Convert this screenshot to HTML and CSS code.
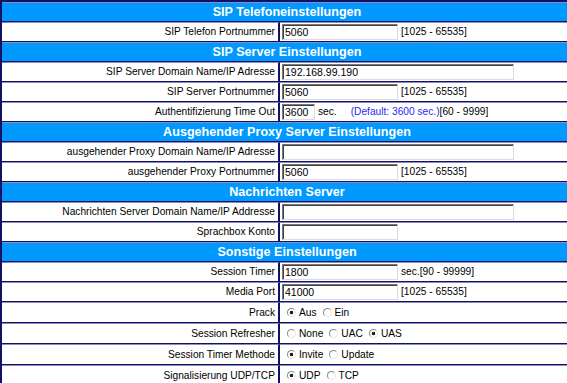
FILE: index.html
```html
<!doctype html>
<html lang="de">
<head>
	<meta charset="utf-8">
	<title>SIP Einstellungen</title>
	<link rel="stylesheet" href="styles.css">
</head>
<body>
	<form class="page">
		<table class="cfg">
			<tr class="head"><td colspan="2">SIP Telefoneinstellungen</td></tr>
			<tr>
				<td class="lbl">SIP Telefon Portnummer</td>
				<td class="val"><input class="field w-port" value="5060"><span class="hint">[1025 - 65535]</span></td>
			</tr>

			<tr class="head"><td colspan="2">SIP Server Einstellungen</td></tr>
			<tr>
				<td class="lbl">SIP Server Domain Name/IP Adresse</td>
				<td class="val"><input class="field w-host" value="192.168.99.190"></td>
			</tr>
			<tr>
				<td class="lbl">SIP Server Portnummer</td>
				<td class="val"><input class="field w-port" value="5060"><span class="hint">[1025 - 65535]</span></td>
			</tr>
			<tr>
				<td class="lbl">Authentifizierung Time Out</td>
				<td class="val"><input class="field w-short" value="3600"><span class="hint">sec.</span><span class="note">(Default: 3600 sec.)</span>[60 - 9999]</td>
			</tr>

			<tr class="head"><td colspan="2">Ausgehender Proxy Server Einstellungen</td></tr>
			<tr>
				<td class="lbl">ausgehender Proxy Domain Name/IP Adresse</td>
				<td class="val"><input class="field w-host" value=""></td>
			</tr>
			<tr>
				<td class="lbl">ausgehender Proxy Portnummer</td>
				<td class="val"><input class="field w-port" value="5060"><span class="hint">[1025 - 65535]</span></td>
			</tr>

			<tr class="head"><td colspan="2">Nachrichten Server</td></tr>
			<tr>
				<td class="lbl">Nachrichten Server Domain Name/IP Addresse</td>
				<td class="val"><input class="field w-host" value=""></td>
			</tr>
			<tr>
				<td class="lbl">Sprachbox Konto</td>
				<td class="val"><input class="field w-port" value=""></td>
			</tr>

			<tr class="head"><td colspan="2">Sonstige Einstellungen</td></tr>
			<tr>
				<td class="lbl">Session Timer</td>
				<td class="val"><input class="field w-port" value="1800"><span class="hint">sec.[90 - 99999]</span></td>
			</tr>
			<tr>
				<td class="lbl">Media Port</td>
				<td class="val"><input class="field w-port" value="41000"><span class="hint">[1025 - 65535]</span></td>
			</tr>
			<tr>
				<td class="lbl">Prack</td>
				<td class="val">
					<div class="choices">
						<label class="opt"><input type="radio" name="prack" checked>Aus</label>
						<label class="opt"><input type="radio" name="prack">Ein</label>
					</div>
				</td>
			</tr>
			<tr>
				<td class="lbl">Session Refresher</td>
				<td class="val">
					<div class="choices">
						<label class="opt"><input type="radio" name="refresher">None</label>
						<label class="opt"><input type="radio" name="refresher">UAC</label>
						<label class="opt"><input type="radio" name="refresher" checked>UAS</label>
					</div>
				</td>
			</tr>
			<tr>
				<td class="lbl">Session Timer Methode</td>
				<td class="val">
					<div class="choices">
						<label class="opt"><input type="radio" name="method" checked>Invite</label>
						<label class="opt"><input type="radio" name="method">Update</label>
					</div>
				</td>
			</tr>
			<tr>
				<td class="lbl">Signalisierung UDP/TCP</td>
				<td class="val">
					<div class="choices">
						<label class="opt"><input type="radio" name="transport" checked>UDP</label>
						<label class="opt"><input type="radio" name="transport">TCP</label>
					</div>
				</td>
			</tr>
		</table>
	</form>
</body>
</html>
```

FILE: styles.css
```css
html, body{
	margin: 0;
	overflow: hidden;
	background: #fff;
}
.page{
	margin: 0;
}
.cfg{
	width: 572px;
	border-collapse: separate;
	border-spacing: 0;
	border-top: 2px solid #111166;
	border-left: 2px solid #111166;
	background: #fff;
	font-family: "Liberation Sans", Arial, sans-serif;
	font-size: 10.2px;
	color: #000;
}
.cfg td{
	padding: 0 3px;
	line-height: 18px;
	border-top: 1px solid #8c8cbc;
	border-bottom: 1px solid #111166;
	white-space: nowrap;
}
.head td{
	background: #0099ff;
	color: #fff;
	font-weight: bold;
	font-size: 12.6px;
	text-align: center;
}
.lbl{
	width: 270px;
	text-align: right;
	border-right: 2px solid #111166;
}
.val{
	padding-left: 2px !important;
}

.field{
	box-sizing: border-box;
	height: 16px;
	margin: 0;
	padding: 0 2px;
	vertical-align: middle;
	font-family: "Liberation Sans", Arial, sans-serif;
	font-size: 10.5px;
	color: #000;
	background: #fff;
	border: 1px solid;
	border-color: #7a7a7a #dcdcdc #dcdcdc #7a7a7a;
	box-shadow: inset 1px 1px 0 #404040;
	outline: none;
}
.w-port{ width: 116px; }
.w-host{ width: 232px; }
.w-short{ width: 33px; }

.hint{
	margin-left: 3px;
}
.note{
	margin-left: 14px;
	color: #2a2af0;
}

.choices{
	display: flex;
	align-items: center;
	height: 19px;
	padding-left: 2px;
}
.opt{
	display: flex;
	align-items: center;
	margin-right: 3px;
}
.opt input{
	appearance: none;
	-webkit-appearance: none;
	box-sizing: border-box;
	width: 9px;
	height: 9px;
	margin: 0 3px 0 3px;
	border-radius: 50%;
	border: 1px solid;
	border-color: #8a8a8a #e6e6e6 #e6e6e6 #8a8a8a;
	background: #fff;
}
.opt input:checked{
	background: radial-gradient(circle, #222 0 1.5px, #fff 2.1px);
}
```
